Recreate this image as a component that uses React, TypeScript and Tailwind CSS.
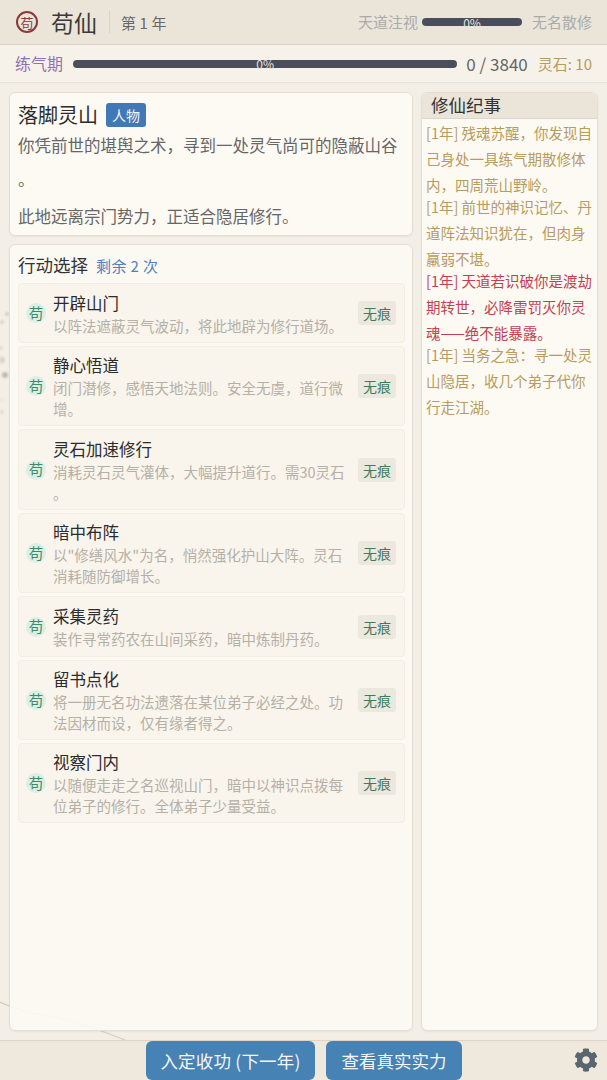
import React from "react";
import { FaCog } from "react-icons/fa";

const actions = [
  { t: "开辟山门", d: "以阵法遮蔽灵气波动，将此地辟为修行道场。", h: "h-[60px]" },
  { t: "静心悟道", d: "闭门潜修，感悟天地法则。安全无虞，道行微增。", h: "h-[80px]" },
  { t: "灵石加速修行", d: "消耗灵石灵气灌体，大幅提升道行。需30灵石。", h: "h-[81px]" },
  { t: "暗中布阵", d: "以\"修缮风水\"为名，悄然强化护山大阵。灵石消耗随防御增长。", h: "h-[80px]" },
  { t: "采集灵药", d: "装作寻常药农在山间采药，暗中炼制丹药。", h: "h-[61px]" },
  { t: "留书点化", d: "将一册无名功法遗落在某位弟子必经之处。功法因材而设，仅有缘者得之。", h: "h-[80px]" },
  { t: "视察门内", d: "以随便走走之名巡视山门，暗中以神识点拨每位弟子的修行。全体弟子少量受益。", h: "h-[80px]" },
];

const logs = [
  { c: "text-[#b89b5e]", t: "[1年] 残魂苏醒，你发现自己身处一具练气期散修体内，四周荒山野岭。" },
  { c: "text-[#b89b5e]", t: "[1年] 前世的神识记忆、丹道阵法知识犹在，但肉身羸弱不堪。" },
  { c: "text-[#c2404f]", t: "[1年] 天道若识破你是渡劫期转世，必降雷罚灭你灵魂——绝不能暴露。" },
  { c: "text-[#b89b5e]", t: "[1年] 当务之急：寻一处灵山隐居，收几个弟子代你行走江湖。" },
];

function Bar({ w }: { w: string }) {
  return (
    <div className={`relative h-2 rounded-full bg-[#4a4d5c] ${w}`}>
      <span className="absolute inset-0 flex items-center justify-center pt-px text-[12px] leading-none text-[#e8e4dc]">0%</span>
    </div>
  );
}

export default function App() {
  return (
    <div
      className="relative flex h-[1080px] w-[607px] flex-col overflow-hidden bg-[#f4efe6] text-[#2c2c2c]"
      style={{ fontFamily: '"Noto Sans CJK SC", "Noto Sans", sans-serif' }}
    >
      <svg className="pointer-events-none absolute inset-0" width="607" height="1080" fill="none">
        <g stroke="#bdb5a6" strokeLinecap="round">
          <path d="M0 1002 Q20 1012 60 1018 Q90 1026 125 1040" strokeWidth="1.2" opacity="0.6" />
          <path d="M60 1018 L70 1026" strokeWidth="1" opacity="0.3" />
        </g>
        <g fill="#9d968a" className="blur-[1px]">
          <circle cx="5" cy="375" r="3" opacity="0.6" />
          <circle cx="2" cy="360" r="3" opacity="0.3" />
          <circle cx="7" cy="314" r="2" opacity="0.4" />
          <circle cx="2" cy="322" r="2" opacity="0.3" />
          <circle cx="1" cy="348" r="1.5" opacity="0.4" />
          <circle cx="2" cy="412" r="1.5" opacity="0.4" />
          <circle cx="2" cy="400" r="1" opacity="0.3" />
        </g>
      </svg>

      <header className="relative flex h-[45px] shrink-0 items-center border-b border-[#d9d3c7] bg-[#ebe5d9] pl-[16px] pr-[15px]">
        <div className="flex h-[22px] w-[22px] items-center justify-center rounded-full border-2 border-[#8b3a3a] text-[13px] leading-none text-[#8b3a3a]">苟</div>
        <div className="ml-[13px] text-[23px] leading-none text-[#3a3a3a]">苟仙</div>
        <div className="ml-[12px] h-[22px] w-px bg-[#d9d3c7]" />
        <div className="ml-[11px] text-[15px] leading-none tracking-[0.1px] text-[#666]">第 1 年</div>
        <div className="ml-auto flex items-center text-[15px] text-[#aaa]">
          <span>天道注视</span>
          <div className="ml-[4px] mr-[10px]"><Bar w="w-[100px]" /></div>
          <span>无名散修</span>
        </div>
      </header>

      <div className="relative flex h-[38px] shrink-0 items-center border-b border-[#e8e2d6] bg-[#f7f2e9] pl-[15px] pr-[15px]">
        <span className="pb-[2px] text-[16px] leading-none text-[#9070b8]">练气期</span>
        <div className="ml-[10px] flex-1"><Bar w="w-full" /></div>
        <span className="ml-[9px] text-[17px] leading-none text-[#666]">0 / 3840</span>
        <span className="ml-[10px] text-[15px] leading-none text-[#b89b5e]">灵石: 10</span>
      </div>

      <main className="relative flex flex-1 gap-[8px] p-[9px]">
        <div className="flex w-[404px] shrink-0 flex-col gap-[8px]">
          <section className="h-[144px] rounded-[6px] border border-[#e5dfd3] bg-[#fdfaf4] pl-[8px] pr-[7px] pt-[9px] shadow-[0_1px_2px_rgba(0,0,0,0.05)]">
            <div className="flex h-[26px] items-center">
              <span className="text-[20px] leading-none text-[#2c2c2c]">落脚灵山</span>
              <span className="ml-[8px] flex h-[24px] w-[40px] items-center justify-center rounded-[3px] bg-[#4078b8] text-[14px] leading-none text-[#f5f5f5]">人物</span>
            </div>
            <p className="text-[16.5px] leading-[34px] text-[#666] [line-break:anywhere]">你凭前世的堪舆之术，寻到一处灵气尚可的隐蔽山谷。</p>
            <p className="mt-[4px] text-[16.5px] leading-[33px] text-[#666]">此地远离宗门势力，正适合隐居修行。</p>
          </section>

          <section className="flex-1 rounded-[6px] border border-[#e5dfd3] bg-[#fdfaf4]/90 pl-[8px] pr-[7px] pt-[8px] shadow-[0_1px_2px_rgba(0,0,0,0.05)]">
            <div className="mb-[6px] flex h-[24px] items-center">
              <span className="text-[17.5px] leading-none text-[#333]">行动选择</span>
              <span className="ml-[8px] text-[15px] leading-none tracking-[0.4px] text-[#4f81bd]">剩余 2 次</span>
            </div>
            <div className="flex flex-col gap-[3px]">
              {actions.map((a) => (
                <div key={a.t} className={`flex items-center rounded-[4px] border border-[#f3eee4] bg-[#f9f5ed] pl-[7px] pr-[8px] ${a.h}`}>
                  <div className="flex h-[20px] w-[20px] shrink-0 items-center justify-center rounded-full bg-[#dcefe4] text-[14.5px] leading-none text-[#3f8a6b]">苟</div>
                  <div className="ml-[7px] min-w-0 flex-1 pr-[9px]">
                    <div className="text-[16.5px] leading-[24px] text-[#2c2c2c]">{a.t}</div>
                    <div className="text-[14.5px] leading-[21px] text-[#b5b0a6] [line-break:anywhere]">{a.d}</div>
                  </div>
                  <div className="flex h-[24px] w-[38px] shrink-0 items-center justify-center rounded-[3px] bg-[#ebe8de] text-[14px] leading-none text-[#3f7a60]">无痕</div>
                </div>
              ))}
            </div>
          </section>
        </div>

        <aside className="flex min-w-0 flex-1 flex-col overflow-hidden rounded-[6px] border border-[#e5dfd3] bg-[#fdfaf4] shadow-[0_1px_2px_rgba(0,0,0,0.05)]">
          <div className="flex h-[26px] shrink-0 items-center border-b border-[#ddd6c8] bg-[#ebe5d9] pb-[1px] pl-[9px] text-[17.5px] leading-none text-[#333]">修仙纪事</div>
          <div className="px-[4px] pt-[1px]">
            {logs.map((l, i) => (
              <p key={i} className={`mb-[-4px] text-[14.5px] leading-[26px] ${l.c}`}>{l.t}</p>
            ))}
          </div>
        </aside>
      </main>

      <footer className="relative flex h-[40px] shrink-0 items-center justify-center border-t border-[#ddd6c8] bg-[#efe9dd]">
        <div className="flex h-[39px] gap-[11px] pl-[1px]">
          <button className="h-[39px] w-[169px] rounded-[6px] bg-[#4682b4] text-[17.5px] leading-none tracking-[0.2px] text-[#f5f5f5]">入定收功 (下一年)</button>
          <button className="h-[39px] w-[136px] rounded-[6px] bg-[#4682b4] text-[17.5px] leading-none text-[#f5f5f5]">查看真实实力</button>
        </div>
        <FaCog className="absolute right-[9px] top-[7px] text-[#5a6570]" size={24} />
      </footer>
    </div>
  );
}
